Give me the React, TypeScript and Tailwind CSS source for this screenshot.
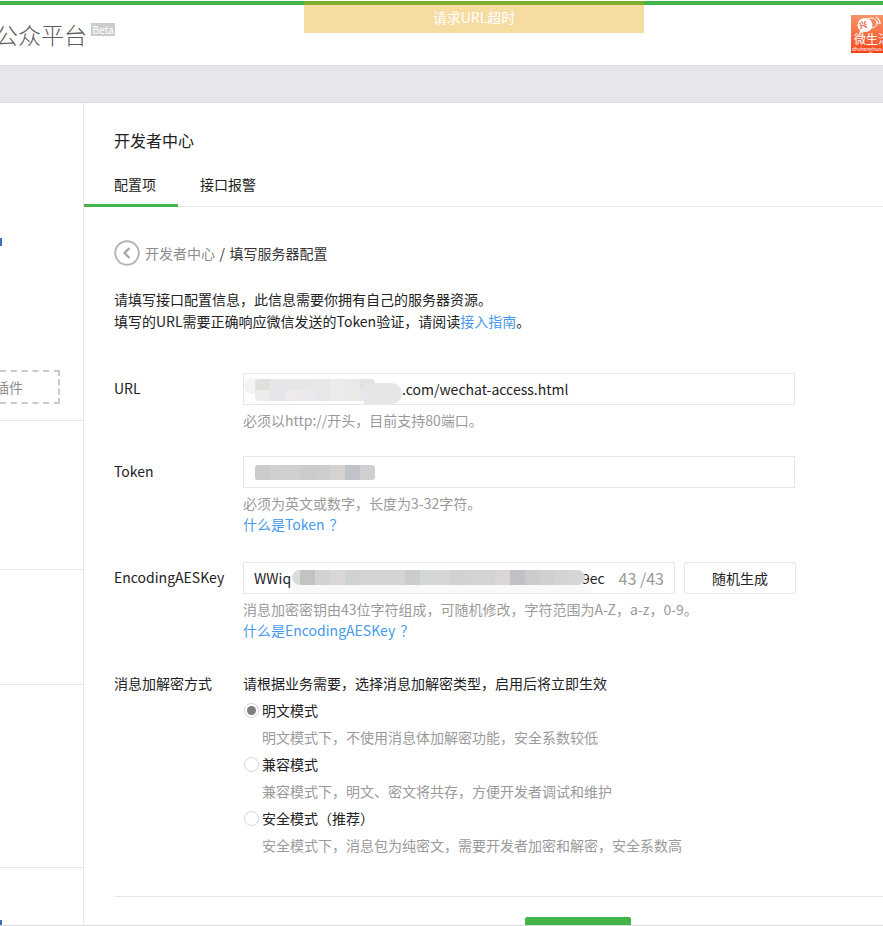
const blue = "text-[#459ae9]";

const urlTop = ["bg-[#e0e1dc]", "bg-[#e5e6ea]", "bg-[#e6e7ea]", "bg-[#e8e7e5]", "bg-[#e8e8e8]", "bg-[#ececec]", "bg-[#e9e9e9]", "bg-[#e2e3e1]"];
const urlBottom = ["bg-[#ececea]", "bg-[#e3e5e8]", "bg-[#eeeaea]", "bg-[#e8eaee]", "bg-[#e8e8e8]", "bg-[#ebebeb]", "bg-[#e9e9e6]", "bg-[#e8e8e8]"];
const tokenCells = ["bg-[#cccccc]", "bg-[#cfcfcf]", "bg-[#d0d0d0]", "bg-[#cbcbcb]", "bg-[#cdcdcd]", "bg-[#d6d2d0]", "bg-[#c2c3c8]", "bg-[#d0d0d0]"];
const aesCells = [
    "bg-[#c2c4c2]", "bg-[#d2d2d2]", "bg-[#dcd7d7]", "bg-[#cfd1d2]", "bg-[#d3d4d6]", "bg-[#d3d4d6]", "bg-[#d4d5d2]",
    "bg-[#cbcdcd]", "bg-[#d4d7d7]", "bg-[#d8d5d5]", "bg-[#d0d2d2]", "bg-[#d2d4d4]", "bg-[#d2d3d3]", "bg-[#dad6d5]",
    "bg-[#bfc1c5]", "bg-[#cbcbcd]", "bg-[#d0d0cf]", "bg-[#d4d4d4]", "bg-[#d6d6d6]",
];

function Cells({ cells, height }: { cells: string[]; height: string }) {
    return (
        <div className="flex">
            {cells.map((c, i) => (
                <div key={i} className={"w-[15px] " + height + " " + c} />
            ))}
        </div>
    );
}

function Radio({ checked, label, hint }: { checked?: boolean; label: string; hint: string }) {
    return (
        <div>
            <div className="flex items-center h-[22px] text-[#222]">
                <span className="size-[15px] rounded-full border border-[#d4d4d4] flex items-center justify-center mr-[3px] shrink-0">
                    {checked && <span className="size-[9px] rounded-full bg-[#7d7d7d]" />}
                </span>
                {label}
            </div>
            <div className="h-[32px] pl-[18px] pt-[5px] text-[#9a9a9a] leading-[22px]">{hint}</div>
        </div>
    );
}

function Logo() {
    return (
        <div className="relative w-[38px] h-[38px] shrink-0 overflow-hidden bg-gradient-to-b from-[#f79468] to-[#f4410f]">
            <svg width="38" height="38" viewBox="0 0 38 38" className="absolute inset-0">
                <ellipse cx="20" cy="8" rx="6" ry="5" fill="none" stroke="#fff" strokeWidth="1" />
                <ellipse cx="14" cy="10" rx="7.5" ry="7" fill="#fff" />
                <path d="M9 15l-1 4 5-2z" fill="#fff" />
                <path d="M25 2a8 8 0 0 1 4 7M25 6a4 4 0 0 1 2 3" stroke="#fff" strokeWidth="1.2" fill="none" />
            </svg>
            <div className="absolute left-[8px] top-[5px] text-[8px] leading-[9px] font-bold text-[#e8502a] whitespace-nowrap -rotate-12">兴</div>
            <div className="absolute left-[3px] top-[17px] text-[12px] leading-[14px] text-white whitespace-nowrap">微生活</div>
            <div className="absolute left-[1px] top-[31px] text-[5px] leading-[6px] text-white whitespace-nowrap">dhshenghuo.com</div>
        </div>
    );
}

export default function App() {
    return (
        <div className="relative w-[883px] h-[926px] overflow-hidden bg-white text-[14px] leading-[22px] text-[#353535] font-['Noto_Sans_CJK_SC',sans-serif]">
            {/* toast */}
            <div className="absolute left-[304px] top-[1px] w-[340px] h-[32px] z-10 bg-[rgba(231,160,0,0.37)] text-white text-center leading-[32px]">
                请求URL超时
            </div>

            <div className="h-[1px] bg-white" />
            <div className="h-[4px] bg-[#44b549]" />
            <header className="h-[60px] flex items-start justify-between">
                <div className="flex items-start -ml-[51px] mt-[14px]">
                    <span className="text-[23px] leading-[30px] text-[#5b5b5b] font-light whitespace-nowrap">微信公众平台</span>
                    <span className="ml-[4px] mt-[4px] h-[13px] w-[24px] bg-[#cccccc] text-white text-[10px] leading-[13px] text-center">Beta</span>
                </div>
                <div className="mr-[-6px] mt-[10px]">
                    <Logo />
                </div>
            </header>
            <div className="h-[38px] bg-[#e6e7ec] border-y border-[#d9dadc]" />

            <div className="flex h-[823px]">
                <aside className="w-[84px] shrink-0 border-r border-[#e7e7eb] overflow-hidden">
                    <div className="h-[318px] border-b border-[#e7e7eb] pt-[135px]">
                        <div className="w-[2px] h-[8px] bg-[#3d6fb5]" />
                        <div className="mt-[124px] w-[60px] h-[34px] border-2 border-dashed border-[#c9c9c9] border-l-0 flex items-center text-[#8d8d8d] overflow-hidden">
                            <span className="-ml-[5px] whitespace-nowrap">插件</span>
                        </div>
                    </div>
                    <div className="h-[149px] border-b border-[#e7e7eb]" />
                    <div className="h-[115px] border-b border-[#e7e7eb]" />
                    <div className="h-[183px] border-b border-[#e7e7eb]" />
                    <div className="w-[2px] h-[5px] mt-[52px] bg-[#3d6fb5]" />
                </aside>

                <main className="flex-1 min-w-0">
                    <h2 className="pl-[30px] pt-[25px] text-[16px] leading-[24px] text-[#222]">开发者中心</h2>
                    <div className="flex mt-[17px] h-[38px] border-b border-[#e7e7eb]">
                        <div className="w-[94px] h-[38px] border-b-[3px] border-[#44b549] pl-[30px] leading-[30px] text-[#222]">配置项</div>
                        <div className="ml-[22px] leading-[30px] text-[#222]">接口报警</div>
                    </div>

                    <div className="pl-[30px]">
                        <div className="flex items-center mt-[33px] h-[26px]">
                            <svg width="26" height="26" viewBox="0 0 26 26" className="mr-[5px]">
                                <circle cx="13" cy="13" r="11.8" fill="none" stroke="#b5b5b5" strokeWidth="2" />
                                <path d="M15.5 8l-5 5 5 5" fill="none" stroke="#a5a5a5" strokeWidth="2.2" />
                            </svg>
                            <span className="text-[#8d8d8d]">开发者中心</span>
                            <span className="mx-[4.5px] text-[#353535]">/</span>
                            <span className="text-[#353535]">填写服务器配置</span>
                        </div>

                        <p className="mt-[22px] text-[#222]">请填写接口配置信息，此信息需要你拥有自己的服务器资源。</p>
                        <p className="text-[#222]">
                            填写的URL需要正确响应微信发送的Token验证，请阅读<span className={blue}>接入指南</span>。
                        </p>

                        {/* URL */}
                        <div className="flex mt-[41px]">
                            <div className="w-[129px] leading-[30px] text-[#222]">URL</div>
                            <div>
                                <div className="relative w-[552px] h-[32px] border border-[#e7e7eb] pl-[10px] leading-[30px] text-[#222]">
                                    <span className="ml-[148px]">.com/wechat-access.html</span>
                                    <div className="absolute left-[0px] top-[4px] w-[12px] h-[16px] rounded-l-full bg-[#f3f3f3]" />
                                    <div className="absolute left-[11px] top-[5px] rounded-[4px] overflow-hidden">
                                        <Cells cells={urlTop} height="h-[11px]" />
                                        <Cells cells={urlBottom} height="h-[11px]" />
                                    </div>
                                    <div className="absolute left-[120px] top-[9px] w-[38px] h-[21px] rounded-r-full bg-[#e6e6e8]" />
                                </div>
                                <div className="mt-[4px] text-[#9a9a9a]">必须以http://开头，目前支持80端口。</div>
                            </div>
                        </div>

                        {/* Token */}
                        <div className="flex mt-[25px]">
                            <div className="w-[129px] leading-[30px] text-[#222]">Token</div>
                            <div>
                                <div className="relative w-[552px] h-[32px] border border-[#e7e7eb]">
                                    <div className="absolute left-[11px] top-[8px] rounded-[3px] overflow-hidden">
                                        <Cells cells={tokenCells} height="h-[15px]" />
                                    </div>
                                </div>
                                <div className="mt-[4px] text-[#9a9a9a]">必须为英文或数字，长度为3-32字符。</div>
                                <div className={"-mt-[1px] " + blue}>
                                    什么是Token<span className="ml-[5px]">？</span>
                                </div>
                            </div>
                        </div>

                        {/* EncodingAESKey */}
                        <div className="flex mt-[27px]">
                            <div className="w-[129px] leading-[30px] text-[#222]">EncodingAESKey</div>
                            <div>
                                <div className="flex">
                                    <div className="relative w-[432px] h-[32px] border border-[#e7e7eb] pl-[10px] pr-[10px] leading-[30px] flex justify-between">
                                        <span className="text-[#222]">WWiq</span>
                                        <span className="flex">
                                            <span className="text-[#222] mr-[14px]">9ec</span>
                                            <span className="text-[16px] text-[#9a9a9a]">43 /43</span>
                                        </span>
                                        <div className="absolute left-[48px] top-[21px] w-[300px] h-[9px] bg-[#f9f9f9]" />
                                        <div className="absolute left-[48px] top-[7px] w-[12px] h-[15px] rounded-l-full bg-[#dadcda]" />
                                        <div className="absolute left-[56px] top-[7px] rounded-r-[8px] overflow-hidden">
                                            <Cells cells={aesCells} height="h-[15px]" />
                                        </div>
                                    </div>
                                    <div className="ml-[9px] w-[112px] h-[32px] border border-[#e7e7eb] rounded-[2px] text-center leading-[30px] text-[#222]">随机生成</div>
                                </div>
                                <div className="mt-[4px] text-[#9a9a9a]">消息加密密钥由43位字符组成，可随机修改，字符范围为A-Z，a-z，0-9。</div>
                                <div className={"-mt-[1px] " + blue}>
                                    什么是EncodingAESKey<span className="ml-[5px]">？</span>
                                </div>
                            </div>
                        </div>

                        {/* encrypt mode */}
                        <div className="flex mt-[31px]">
                            <div className="w-[129px] text-[#222]">消息加解密方式</div>
                            <div>
                                <div className="text-[#222] mb-[5px]">请根据业务需要，选择消息加解密类型，启用后将立即生效</div>
                                <div className="pl-[1px]">
                                    <Radio checked label="明文模式" hint="明文模式下，不使用消息体加解密功能，安全系数较低" />
                                    <Radio label="兼容模式" hint="兼容模式下，明文、密文将共存，方便开发者调试和维护" />
                                    <Radio label="安全模式（推荐）" hint="安全模式下，消息包为纯密文，需要开发者加密和解密，安全系数高" />
                                </div>
                            </div>
                        </div>

                        <div className="mt-[35px] border-t border-[#e7e7eb] pt-[20px]">
                            <div className="ml-[411px] w-[106px] h-[40px] bg-[#44b549] rounded-[2px]" />
                        </div>
                    </div>
                </main>
            </div>
            {/* bottom edge */}
            <div className="absolute left-0 right-0 bottom-0 h-[1px] bg-[#d9dadc] z-10" />
        </div>
    );
}
